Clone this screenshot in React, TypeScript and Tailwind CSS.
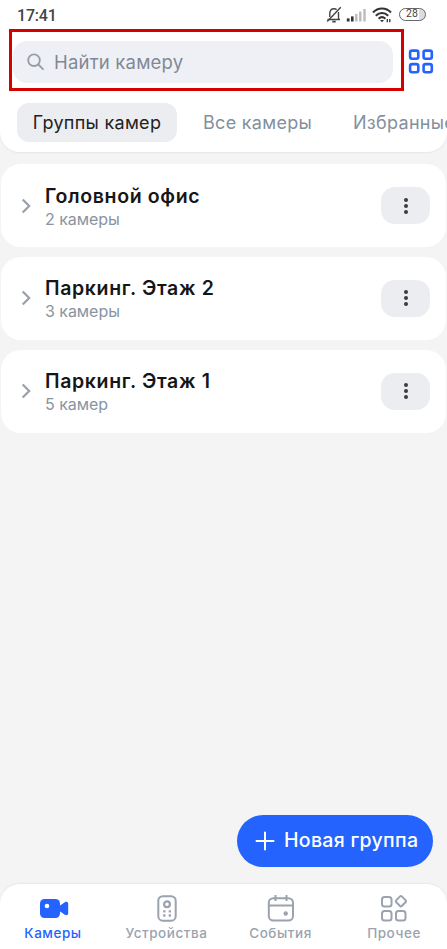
import React from "react";

const groups = [
  { title: "Головной офис", count: "2 камеры" },
  { title: "Паркинг. Этаж 2", count: "3 камеры" },
  { title: "Паркинг. Этаж 1", count: "5 камер" },
];

function StatusBar() {
  return (
    <div className="flex h-[29px] items-center pl-[17px] text-[#444]">
      <span className="w-[309px] pt-[2px] font-[Roboto] text-[16px] font-medium leading-none tracking-[-0.2px]">17:41</span>
      <svg width="16" height="18" viewBox="0 0 16 18" fill="none" stroke="#444" strokeWidth="1.4">
        <path d="M1.5 13.5h12.5M3.8 11V7.6c0-3 1.6-4.9 4.2-4.9 1 0 1.9.3 2.6.9M12.5 6v7.5" />
        <path d="M14.8 1.2 1.2 15.4" />
        <path d="M6.3 15.6h3.4" strokeWidth="1.8" />
      </svg>
      <svg className="ml-[4px]" width="21" height="16" viewBox="0 0 21 16">
        <rect x="0.8" y="11.4" width="2.8" height="3.1" fill="#333" />
        <rect x="5" y="9.4" width="2.6" height="5.1" fill="#333" />
        <rect x="9.1" y="6.9" width="2.4" height="7.6" fill="#bbb" />
        <rect x="13.1" y="4.6" width="2.4" height="9.9" fill="#bbb" />
        <rect x="17.3" y="2" width="2.4" height="12.5" fill="#bbb" />
      </svg>
      <svg className="ml-[5px]" width="21" height="18" viewBox="0 0 21 18" fill="none" stroke="#333" strokeWidth="2">
        <path d="M1 6.5C6 1.2 14 1.2 19 6.5" />
        <path d="M3.8 9.7C7.5 6 12.5 6 16.2 9.7" />
        <path d="M6.6 12.8c2.2-2.2 4.6-2.2 6.8 0" />
        <path d="M8 14h4l-2 2.2z" fill="#333" stroke="none" />
        <path d="M15.3 13v3.2M17.8 13v3.2" strokeWidth="1.3" />
      </svg>
      <span className="ml-[6px] flex h-[13px] w-[27px] items-center rounded-full border-[1.5px] border-[#666] bg-gradient-to-r from-white from-75% to-[#ddd] to-75% pl-[6px] font-[Roboto] text-[10.5px] leading-none">28</span>
    </div>
  );
}

function NavItem({ label, active, children, width }: { label: string; active?: boolean; children: React.ReactNode; width: string }) {
  return (
    <div className={`flex shrink-0 flex-col items-center ${width} ${active ? "text-[#2563ff]" : "text-[#9aa3ae]"}`}>
      <svg width="32" height="30" viewBox="0 0 32 30" fill="none" stroke="currentColor" strokeWidth="2">{children}</svg>
      <span className="mt-[1px] whitespace-nowrap text-[13.5px] font-medium leading-[18px] tracking-[0.55px]">{label}</span>
    </div>
  );
}

export default function App() {
  return (
    <div className="flex h-[949px] w-[447px] flex-col overflow-hidden bg-[#f4f4f4] font-['Inter','Liberation_Sans',sans-serif]">
      <header className="h-[152px] shrink-0 rounded-b-[20px] bg-white shadow-[0_1px_2px_rgba(0,0,0,0.06)]">
        <StatusBar />
        <div className="flex items-center pl-[9px]">
          <div className="h-[62px] w-[395px] border-[3px] border-[#d50000] pl-[1px] pt-[9px]">
            <div className="flex h-[42px] w-[380px] items-center rounded-[14px] bg-[#eff0f5] pl-[14px] text-[#7f8995]">
              <svg width="18" height="18" viewBox="0 0 18 18" fill="none" stroke="#949ca6" strokeWidth="1.8" strokeLinecap="round">
                <circle cx="7" cy="7.2" r="5.8" />
                <path d="m11.3 11.5 4.7 4.7" />
              </svg>
              <span className="ml-[9px] text-[18.5px] leading-none tracking-[0.2px]">Найти камеру</span>
            </div>
          </div>
          <svg className="ml-[4px] mt-[1px]" width="26" height="26" viewBox="0 0 26 26" fill="none" stroke="#2563ff" strokeWidth="2.6">
            <rect x="2.1" y="2.6" width="8.2" height="8.2" rx="2" />
            <rect x="15.6" y="2.6" width="8.2" height="8.2" rx="2" />
            <rect x="2.1" y="16.1" width="8.2" height="8.2" rx="2" />
            <rect x="15.6" y="16.1" width="8.2" height="8.2" rx="2" />
          </svg>
        </div>
        <div className="mt-[11px] flex h-[40px] items-center overflow-hidden whitespace-nowrap pl-[17px] text-[18px] tracking-[0.3px] text-[#83909d]">
          <span className="flex h-[39px] w-[160px] shrink-0 items-center justify-center rounded-[12px] bg-[#ecedf1] text-[#222]">Группы камер</span>
          <span className="ml-[26px] w-[150px] shrink-0">Все камеры</span>
          <span className="shrink-0">Избранные</span>
        </div>
      </header>

      <main className="flex flex-1 flex-col px-px pt-[12px]">
        <div className="flex flex-col gap-[9.5px]">
          {groups.map((g) => (
            <section key={g.title} className="flex h-[83.25px] items-center rounded-[20px] bg-white pl-[20px] pr-[16px]">
              <svg width="10" height="16" viewBox="0 0 10 16" fill="none" stroke="#98a0ab" strokeWidth="2.2">
                <path d="m1.7 1.5 6.5 6.5-6.5 6.5" />
              </svg>
              <div className="ml-[14px] flex-1">
                <div className="text-[19.5px] font-semibold leading-[26px] tracking-[0.65px] text-[#161616]">{g.title}</div>
                <div className="text-[16px] leading-[20px] tracking-[-0.05px] text-[#8994a0]">{g.count}</div>
              </div>
              <button className="flex h-[37px] w-[49px] flex-col items-center justify-center gap-[2px] rounded-[14px] bg-[#ecedf1]">
                <i className="size-[4px] rounded-full bg-[#3c3c40]" />
                <i className="size-[4px] rounded-full bg-[#3c3c40]" />
                <i className="size-[4px] rounded-full bg-[#3c3c40]" />
              </button>
            </section>
          ))}
        </div>
        <button className="mb-[17px] mr-[13px] mt-auto flex h-[52px] w-[196px] items-center self-end rounded-full bg-[#2563ff] pl-[18px] text-white">
          <svg width="20" height="20" viewBox="0 0 20 20" stroke="white" strokeWidth="2" strokeLinecap="round">
            <path d="M10 1.5v17M1.5 10h17" />
          </svg>
          <span className="ml-[9px] whitespace-nowrap text-[19.5px] font-medium leading-none tracking-[0.3px]">Новая группа</span>
        </button>
      </main>

      <nav className="flex h-[65px] shrink-0 overflow-hidden rounded-t-[20px] bg-white pt-[9px] shadow-[0_-1px_2px_rgba(0,0,0,0.06)]">
        <NavItem label="Камеры" active width="w-[106px]">
          <rect x="3" y="6" width="20" height="19" rx="4.5" fill="currentColor" stroke="none" />
          <path d="m22 13.2 5.8-4c1.7-1 3.4-.2 3.4 1.5v9.6c0 1.7-1.7 2.5-3.4 1.5L22 17.8z" fill="currentColor" stroke="none" />
          <circle cx="10" cy="13" r="2.3" fill="white" stroke="none" />
        </NavItem>
        <NavItem label="Устройства" width="w-[121px]">
          <rect x="7.3" y="3.2" width="17.4" height="24.5" rx="4.5" />
          <circle cx="16" cy="11.3" r="2.9" strokeWidth="2.2" />
          <path d="M12.2 18.3h2.3m3.2 0H20M12.2 22.5h2.3m3.2 0H20" strokeWidth="2.3" />
        </NavItem>
        <NavItem label="События" width="w-[107px]">
          <rect x="3.8" y="5.2" width="24.2" height="22.3" rx="4.5" />
          <path d="M4 12.5h24M10.5 2v6M21.5 2v6" />
          <circle cx="20.7" cy="20.5" r="2.2" fill="currentColor" stroke="none" />
        </NavItem>
        <NavItem label="Прочее" width="w-[120px]">
          <rect x="4" y="4" width="9.5" height="9.5" rx="2.5" />
          <path d="M21.8 3.6Q22.9 2.5 24 3.6L27.5 7.1Q28.6 8.2 27.5 9.3L24 12.8Q22.9 13.9 21.8 12.8L18.3 9.3Q17.2 8.2 18.3 7.1Z" />
          <rect x="4" y="18" width="9.5" height="9.5" rx="2.5" />
          <rect x="18" y="18" width="9.5" height="9.5" rx="2.5" />
        </NavItem>
      </nav>
    </div>
  );
}
